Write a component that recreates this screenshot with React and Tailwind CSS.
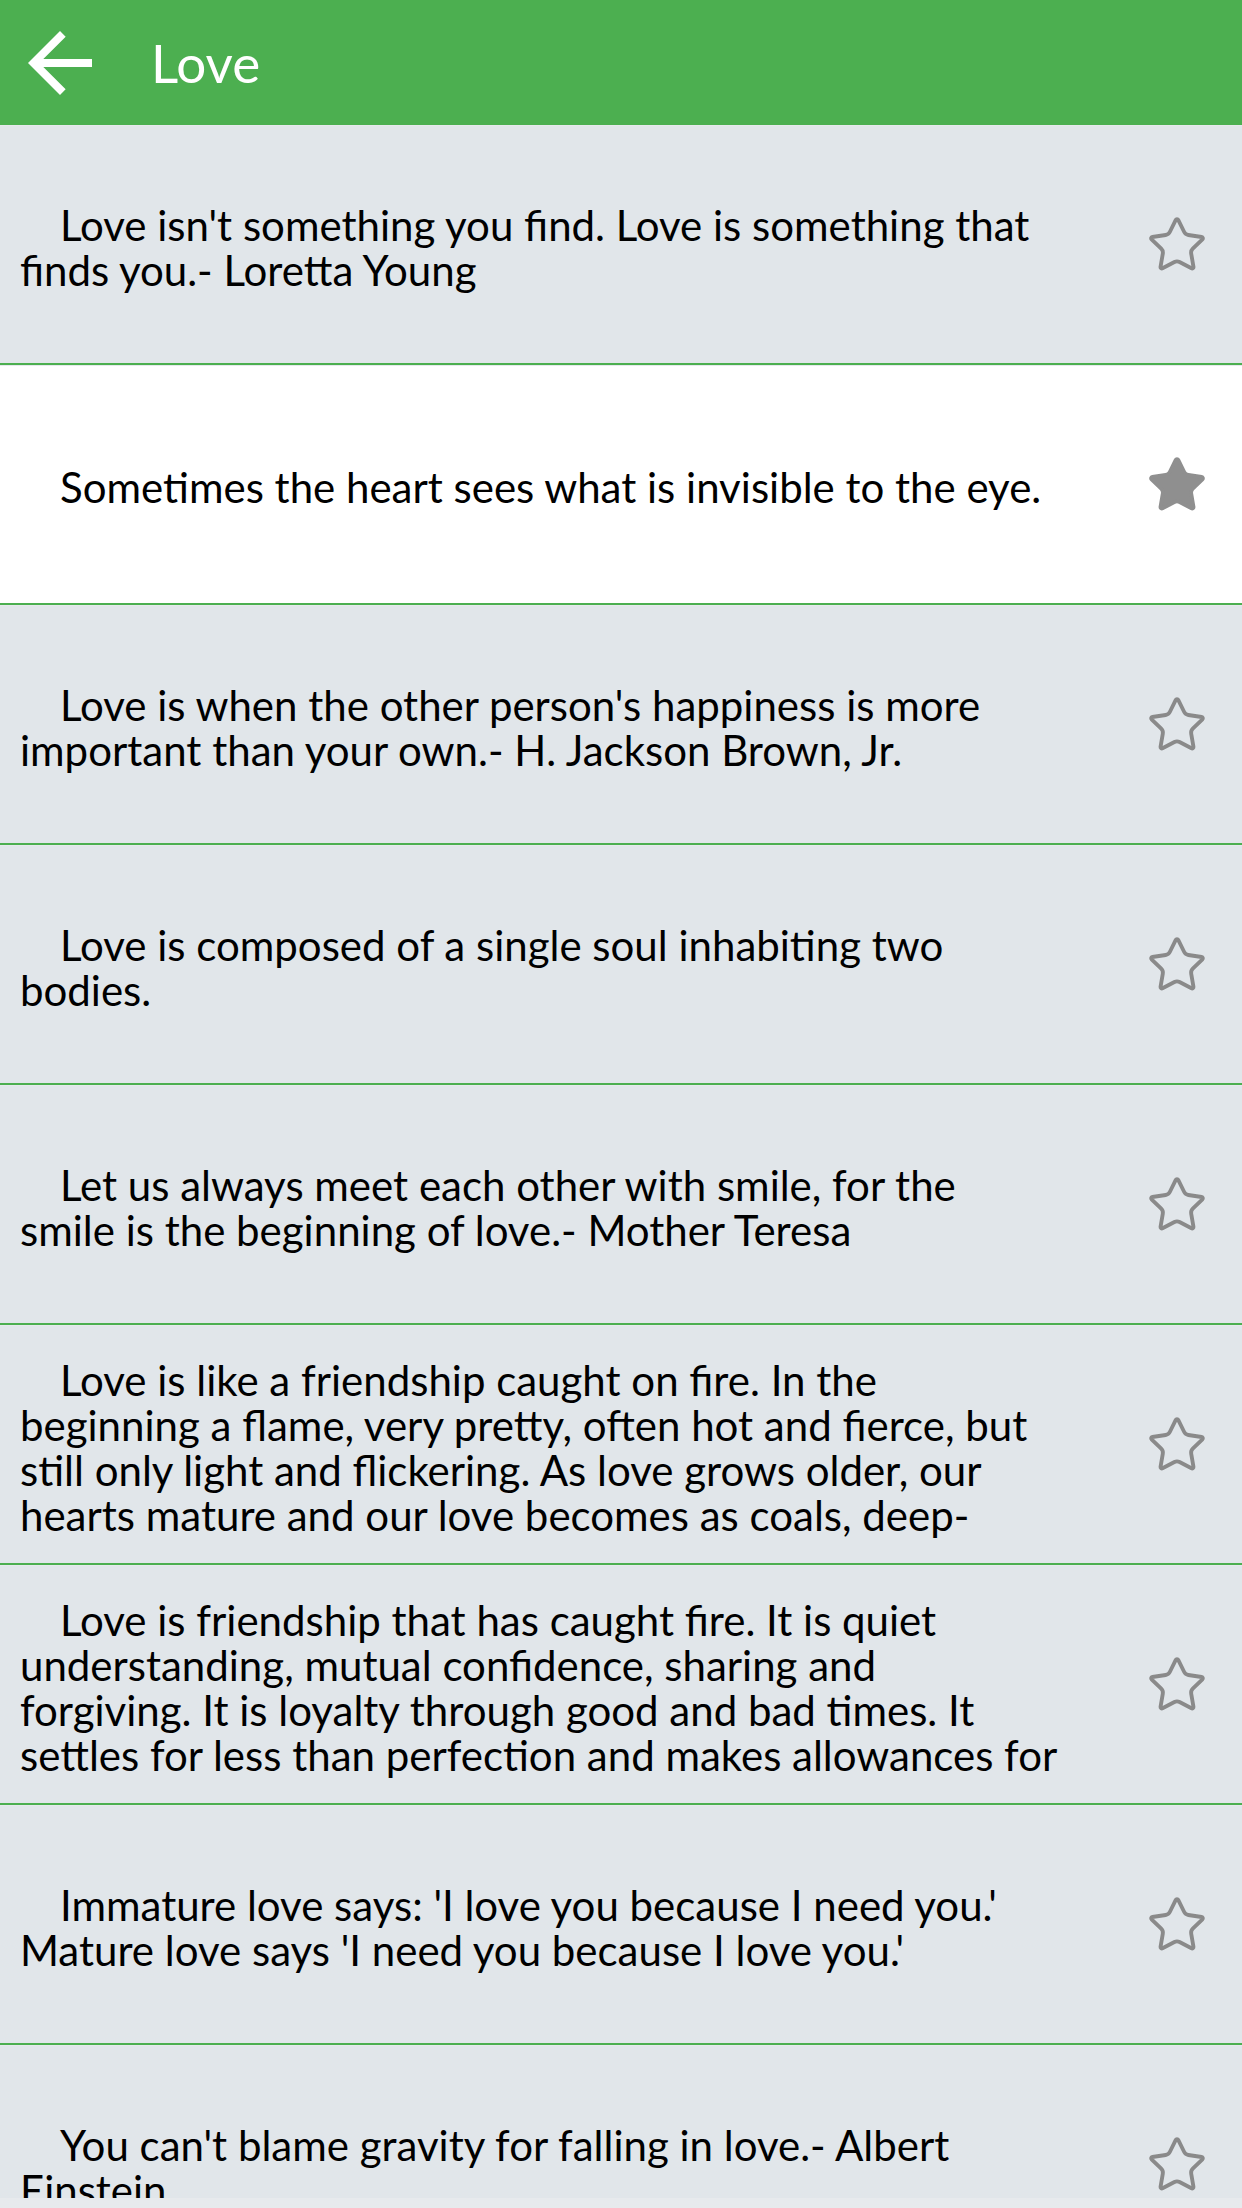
import React from 'react';
import { Star } from 'lucide-react';

// quotes shown in the list, split into the lines as they wrap on screen
const quotes = [
  { lines: ["Love isn't something you find. Love is something that", 'finds you.- Loretta Young'] },
  { lines: ['Sometimes the heart sees what is invisible to the eye.'], fav: true },
  { lines: ["Love is when the other person's happiness is more", 'important than your own.- H. Jackson Brown, Jr.'] },
  { lines: ['Love is composed of a single soul inhabiting two', 'bodies.'] },
  { lines: ['Let us always meet each other with smile, for the', 'smile is the beginning of love.- Mother Teresa'] },
  {
    lines: [
      'Love is like a friendship caught on fire. In the',
      'beginning a flame, very pretty, often hot and fierce, but',
      'still only light and flickering. As love grows older, our',
      'hearts mature and our love becomes as coals, deep-',
    ],
  },
  {
    lines: [
      'Love is friendship that has caught fire. It is quiet',
      'understanding, mutual confidence, sharing and',
      'forgiving. It is loyalty through good and bad times. It',
      'settles for less than perfection and makes allowances for',
    ],
  },
  { lines: ["Immature love says: 'I love you because I need you.'", "Mature love says 'I need you because I love you.'"] },
  { lines: ["You can't blame gravity for falling in love.- Albert", 'Einstein'] },
];

const QuoteRow = ({ quote }) => (
  <div className={`flex flex-col shrink-0 h-[240px] ${quote.fav ? 'bg-white' : 'bg-[#e1e6ea]'}`}>
    <div className="h-[1px] bg-[#e6e9ec]" />
    <div className="flex flex-1 items-center min-h-0">
      <div className="flex-1 pl-[20px] pt-[6px] text-[42px] leading-[45px] text-black font-['Lato',sans-serif]">
        {quote.lines.map((line, i) => (
          <div key={i} className={`whitespace-nowrap ${i === 0 ? 'pl-[40px]' : ''}`}>
            {line}
          </div>
        ))}
      </div>
      <div className="w-[62px] mr-[34px] flex items-center justify-center">
        <Star
          size={62}
          strokeWidth={1.5}
          color={quote.fav ? '#8f8f8f' : '#8a8a8a'}
          fill={quote.fav ? '#8f8f8f' : 'none'}
        />
      </div>
    </div>
    <div className="h-[2px] bg-[#4caf50]" />
  </div>
);

const App = () => {
  return (
    <div className="w-[1242px] h-[2208px] flex flex-col overflow-hidden bg-[#e1e6ea]">
      {/* Toolbar */}
      <div className="h-[125px] shrink-0 bg-[#4caf50] flex items-center">
        <svg viewBox="0 0 24 24" className="w-[96px] h-[96px] ml-[12px]" fill="#ffffff">
          <path d="M20 11H7.83l5.59-5.59L12 4l-8 8 8 8 1.41-1.41L7.83 13H20v-2z" />
        </svg>
        <span className="ml-[43px] text-white text-[53px] font-['Lato',sans-serif]">Love</span>
      </div>

      {/* Quote list */}
      <div className="flex-1 min-h-0 overflow-hidden flex flex-col">
        {quotes.map((q, i) => (
          <QuoteRow key={i} quote={q} />
        ))}
      </div>
      <div className="h-[10px] shrink-0 bg-[#e7eaed]" />
    </div>
  );
};

export default App;
